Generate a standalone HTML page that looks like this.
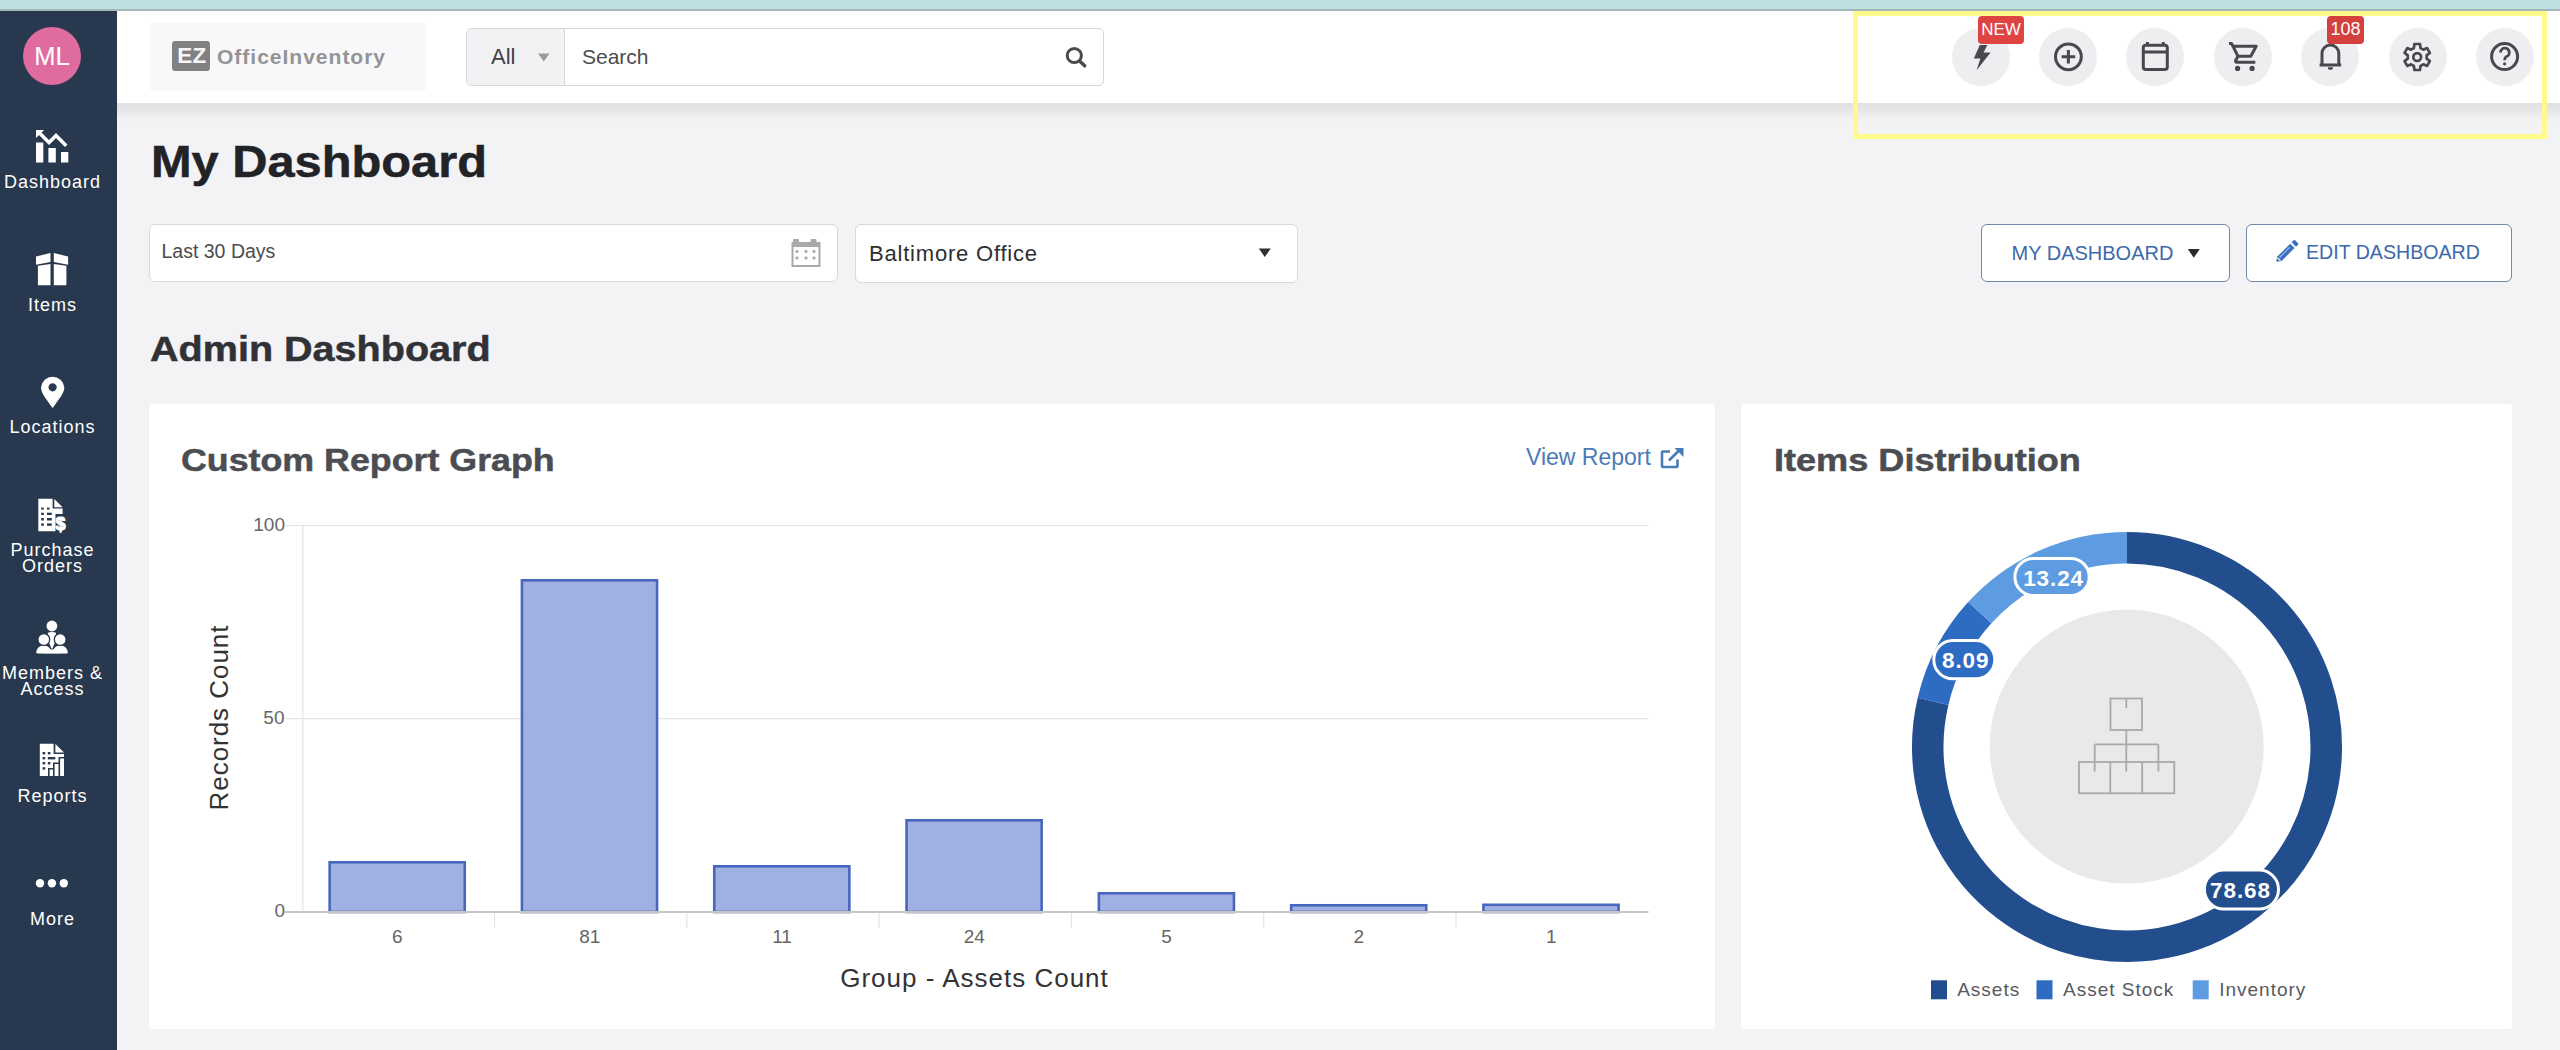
<!DOCTYPE html>
<html><head><meta charset="utf-8">
<style>
*{margin:0;padding:0;box-sizing:border-box}
html,body{width:2560px;height:1050px;overflow:hidden;background:#f3f3f6;font-family:"Liberation Sans",sans-serif;position:relative}
.a{position:absolute}
.t{position:absolute;white-space:nowrap}
#topstrip{left:0;top:0;width:2560px;height:11px;background:#bee0e3;border-bottom:2px solid #a3b7b9}
#side{left:0;top:11px;width:117px;height:1039px;background:#28384e}
#hdr{left:117px;top:11px;width:2443px;height:92px;background:#fff}
#hsh{left:117px;top:103px;width:2443px;height:19px;background:linear-gradient(#e2e2e5 0px,#e3e3e6 4px,#e6e6e9 7px,#ededf0 11px,#f1f1f4 15px,#f3f3f6 19px)}
.sl{color:#fff;font-size:18px;line-height:18px;letter-spacing:1px;text-align:center;width:117px;left:-6px}
.card{background:#fff;border-radius:3px}
.hd{font-weight:bold;transform-origin:0 0;-webkit-text-stroke:0.5px currentColor}
.circ{width:58px;height:58px;border-radius:50%;background:#eeeef0}
</style></head>
<body>
<div id="topstrip" class="a"></div>
<div id="side" class="a"></div>
<div id="hdr" class="a"></div>
<div id="hsh" class="a"></div>

<!-- avatar -->
<div class="a" style="left:23px;top:27px;width:58px;height:58px;border-radius:50%;background:#e06c9f"></div>
<div class="t" style="left:23px;width:58px;text-align:center;top:43.5px;font-size:25.5px;line-height:25.5px;color:#fff">ML</div>

<!-- sidebar labels -->
<div class="t sl" style="top:173.3px">Dashboard</div>
<div class="t sl" style="top:296.3px">Items</div>
<div class="t sl" style="top:417.8px">Locations</div>
<div class="t sl" style="top:541.2px">Purchase</div>
<div class="t sl" style="top:557px">Orders</div>
<div class="t sl" style="top:663.8px">Members &amp;</div>
<div class="t sl" style="top:680px">Access</div>
<div class="t sl" style="top:787.2px">Reports</div>
<div class="t sl" style="top:910.1px">More</div>

<!-- sidebar icons -->
<svg class="a" style="left:0;top:0" width="117" height="1050" viewBox="0 0 117 1050">
 <g fill="#fff">
  <!-- dashboard -->
  <path d="M36 130 L44 130 L41.5 132.5 L49 140 L56 133 L67.5 144.5 L65 147 L56 138 L49 145 L39 135 L36 138 Z"/>
  <rect x="36" y="142.5" width="7.3" height="20"/>
  <rect x="48.4" y="148" width="7.4" height="14.5"/>
  <rect x="61" y="152" width="7.3" height="10.5"/>
  <!-- items -->
  <path d="M36 256.4 L50.5 253.1 L50.5 262.1 L36 264.8 Z"/>
  <path d="M53.8 253.1 L68.1 256.4 L68.1 264.8 L53.8 262.1 Z"/>
  <path d="M37.9 265.7 L50.5 264 L50.5 285.2 L37.9 285.2 Z"/>
  <path d="M53.8 264 L66.4 265.7 L66.4 285.2 L53.8 285.2 Z"/>
  <!-- location -->
  <path d="M52.6 408.1 C47 400 41 393 41 387.4 A11.7 11.7 0 0 1 64.3 387.4 C64.3 393 58.2 400 52.6 408.1 Z M52.6 383.2 A4.1 4.1 0 1 0 52.61 383.2 Z" fill-rule="evenodd"/>
  <!-- purchase orders -->
  <path d="M38.3 498.8 L52.6 498.8 L52.6 508.6 L62.6 508.6 L62.6 514 L55.5 514 L55.5 531.2 L38.3 531.2 Z"/>
  <path d="M54.3 499 L62.6 507.3 L54.3 507.3 Z"/>
 </g>
 <g fill="#28384e">
  <rect x="41.2" y="507.6" width="2.6" height="2"/><rect x="47" y="507.6" width="2.6" height="2"/>
  <rect x="41.2" y="512.7" width="2.6" height="2.3"/><rect x="47" y="512.7" width="4.8" height="2.3"/>
  <rect x="41.2" y="518" width="2.6" height="2.5"/><rect x="47" y="518" width="4.8" height="2.5"/>
  <rect x="41.2" y="523.4" width="2.6" height="2.4"/><rect x="47" y="523.4" width="4.8" height="2.4"/>
 </g>
 <text x="60.6" y="529.6" font-family="Liberation Sans" font-weight="bold" font-size="18" fill="#fff" stroke="#fff" stroke-width="1.1" text-anchor="middle">$</text>
 <g fill="#fff">
  <!-- members -->
  <circle cx="51.9" cy="626" r="5.4"/>
  <path d="M47.8 632.8 Q51.9 631.2 56 632.8 L55 642 L51.9 650 L48.8 642 Z"/>
 </g>
 <g fill="#fff" stroke="#28384e" stroke-width="1.3">
  <path d="M35.3 654 C35.6 647.5 39.5 644.8 43.8 644.8 C48.1 644.8 51.8 647.5 52.3 654 Z"/>
  <path d="M51.6 654 C52.1 647.5 55.9 644.8 60.2 644.8 C64.5 644.8 68.4 647.5 68.8 654 Z"/>
  <circle cx="43.8" cy="639.5" r="5.9"/>
  <circle cx="60.2" cy="639.5" r="5.9"/>
 </g>
 <g fill="#fff">
  <rect x="38" y="650" width="28.3" height="3.4"/>
  <path d="M45 647 Q51.9 652 59 647 L60 653.3 H44 Z"/>
  <!-- reports -->
  <path d="M39.8 743.8 L53.6 743.8 L53.6 754 L64 754 L64 776 L39.8 776 Z"/>
  <path d="M55.4 744 L64 752.5 L55.4 752.5 Z"/>
 </g>
 <g fill="#28384e">
  <rect x="42.6" y="752" width="2.6" height="2.4"/><rect x="47.8" y="752" width="2.6" height="2.4"/>
  <rect x="42.6" y="757" width="2.6" height="2.4"/><rect x="47.8" y="757" width="7.5" height="2.4"/>
  <rect x="42.6" y="762" width="2.6" height="2.4"/><rect x="47.8" y="762" width="2.6" height="2.4"/>
  <rect x="42.6" y="767.2" width="2.6" height="2.4"/>
  <path d="M48 776 L48 768 L53 768 L53 762.5 L58.5 762.5 L58.5 757 L64 757 L64 758.6 L60.1 758.6 L60.1 776 L58.5 776 L58.5 764 L54.6 764 L54.6 776 L53 776 L53 769.5 L49.6 769.5 L49.6 776 Z"/>
 </g>
 <g fill="#fff">
  <circle cx="40" cy="883.3" r="4.2"/><circle cx="51.9" cy="883.3" r="4.2"/><circle cx="63.8" cy="883.3" r="4.2"/>
 </g>
</svg>

<!-- header: logo -->
<div class="a" style="left:150px;top:23px;width:276px;height:68px;background:#f8f8fa;border-radius:3px"></div>
<div class="a" style="left:172px;top:40.5px;width:38px;height:30px;background:#818184;border-radius:3px"></div>
<div class="t" style="left:173px;width:38px;text-align:center;top:45px;font-size:22.5px;line-height:22.5px;font-weight:bold;color:#f6f6f8;letter-spacing:0.3px">EZ</div>
<div class="t" style="left:216.5px;top:48.3px;font-size:19.5px;line-height:19.5px;font-weight:bold;color:#949497;letter-spacing:0.9px;transform:scaleX(1.08);transform-origin:0 0">OfficeInventory</div>

<!-- search -->
<div class="a" style="left:466px;top:28px;width:638px;height:58px;border:1px solid #d5d8dc;border-radius:5px;background:#fff"></div>
<div class="a" style="left:467px;top:29px;width:98px;height:56px;background:#f2f2f4;border-right:1px solid #d5d8dc;border-radius:4px 0 0 4px"></div>
<div class="t" style="left:491px;top:45.5px;font-size:22px;line-height:22px;color:#3f4144">All</div>
<svg class="a" style="left:537px;top:52px" width="14" height="11"><path d="M1 1.5 L12.5 1.5 L6.75 9.5 Z" fill="#9b9b9d"/></svg>
<div class="t" style="left:582px;top:46.2px;font-size:21px;line-height:21px;color:#4a4c50">Search</div>
<svg class="a" style="left:1062px;top:44px" width="28" height="28" viewBox="0 0 28 28"><circle cx="12.3" cy="11.5" r="7.1" fill="none" stroke="#494b4e" stroke-width="3"/><path d="M17.5 17 L22.7 21.8" stroke="#494b4e" stroke-width="3.5" stroke-linecap="round"/></svg>

<!-- header icons -->
<div class="a circ" style="left:1952px;top:28px"></div>
<div class="a circ" style="left:2039px;top:28px"></div>
<div class="a circ" style="left:2126px;top:28px"></div>
<div class="a circ" style="left:2214px;top:28px"></div>
<div class="a circ" style="left:2301px;top:28px"></div>
<div class="a circ" style="left:2389px;top:28px"></div>
<div class="a circ" style="left:2476px;top:28px"></div>
<svg class="a" style="left:1940px;top:10px" width="620" height="100" viewBox="1940 10 620 100">
 <g fill="#47494c" stroke="none">
  <path d="M1979.8 45 L1987.4 45 L1983.6 52.6 L1990.6 52.6 L1976.6 70.2 L1980.4 58.4 L1973.8 58.4 Z"/>
 </g>
 <g fill="none" stroke="#47494c" stroke-width="3">
  <circle cx="2068.4" cy="56.8" r="12.9"/>
  <path d="M2068.4 50 V63.6 M2061.6 56.8 H2075.2"/>
  <rect x="2143.3" y="45.3" width="24" height="24.3" rx="2.5"/>
  <path d="M2143.3 52 H2167.3"/>
  <path d="M2147.4 42 V46 M2163.3 42 V46"/>
  <path d="M2229 43.6 H2231.6 L2238 56.3 H2250.8 L2256.2 46.2 H2233.2 M2238 56.3 L2235.6 60.6 Q2235.4 62.3 2237.2 62.3 H2255.3" stroke-linejoin="round"/>
  <path d="M2322 63.8 V53.5 A8.4 8.4 0 0 1 2338.8 53.5 V63.8 M2319.6 65 H2341.2" stroke-linejoin="round"/>
  <circle cx="2504.6" cy="56.6" r="13"/>
  <path d="M2500.5 52.5 A4.4 4.4 0 1 1 2506.3 56.7 C2505 57.4 2504.6 58.2 2504.6 60.3" stroke-width="2.8"/>
 </g>
 <g fill="#47494c">
  <circle cx="2237.6" cy="68.4" r="2.6"/><circle cx="2252.1" cy="68.4" r="2.6"/>
  <path d="M2327.8 67.2 H2333 A2.6 2.6 0 0 1 2327.8 67.2 Z"/>
  <rect x="2329.3" y="42.5" width="2.2" height="3"/>
  <circle cx="2504.6" cy="63.8" r="1.6"/>
 </g>
 <g fill="none" stroke="#47494c" stroke-width="2.7" stroke-linejoin="round">
  <path d="M2413.92 47.98 L2414.43 43.99 L2419.97 43.99 L2420.48 47.98 L2423.37 49.65 L2427.08 48.10 L2429.85 52.89 L2426.65 55.33 L2426.65 58.67 L2429.85 61.11 L2427.08 65.90 L2423.37 64.35 L2420.48 66.02 L2419.97 70.01 L2414.43 70.01 L2413.92 66.02 L2411.03 64.35 L2407.32 65.90 L2404.55 61.11 L2407.75 58.67 L2407.75 55.33 L2404.55 52.89 L2407.32 48.10 L2411.03 49.65 Z"/>
  <circle cx="2417.2" cy="57" r="3.9"/>
 </g>
</svg>
<!-- badges -->
<div class="a" style="left:1978px;top:16px;width:46px;height:27.5px;background:#dd4442;border-radius:4px"></div>
<div class="t" style="left:1978px;width:46px;text-align:center;top:21.3px;font-size:17px;line-height:17px;color:#fff">NEW</div>
<div class="a" style="left:2327px;top:16px;width:37px;height:27.5px;background:#d3403e;border-radius:4px"></div>
<div class="t" style="left:2327px;width:37px;text-align:center;top:20.2px;font-size:18px;line-height:18px;color:#fff">108</div>
<!-- yellow highlight -->
<div class="a" style="left:1853px;top:11px;width:694px;height:128px;border:5.5px solid #fffa8c"></div>


<!-- page title -->
<div class="t hd" style="left:151.2px;top:139.6px;font-size:44px;line-height:44px;color:#222327;transform:scaleX(1.108)">My Dashboard</div>

<!-- filters -->
<div class="a" style="left:149px;top:223.5px;width:689px;height:58px;background:#fff;border:1px solid #d7d9dc;border-radius:6px"></div>
<div class="t" style="left:161.5px;top:242.2px;font-size:19.5px;line-height:19.5px;color:#4b4c4f">Last 30 Days</div>
<svg class="a" style="left:790px;top:236px" width="32" height="32" viewBox="0 0 32 32">
 <g fill="#a9a9ab">
  <rect x="3" y="3" width="6" height="5" rx="1"/><rect x="20.5" y="3" width="6" height="5" rx="1"/>
  <path fill-rule="evenodd" d="M1.5 6 H30.5 V31 H1.5 Z M3.5 11 V29 H28.5 V11 Z"/>
  <rect x="5.5" y="14" width="3" height="3" rx="1.2"/><rect x="14.5" y="14" width="3" height="3" rx="1.2"/><rect x="22.5" y="14" width="3" height="3" rx="1.2"/>
  <rect x="5.5" y="20.5" width="3" height="3" rx="1.2"/><rect x="14.5" y="20.5" width="3" height="3" rx="1.2"/><rect x="22.5" y="20.5" width="3" height="3" rx="1.2"/>
 </g>
</svg>
<div class="a" style="left:855px;top:223.5px;width:443px;height:59px;background:#fff;border:1px solid #d7d9dc;border-radius:6px"></div>
<div class="t" style="left:869px;top:242.8px;font-size:22px;line-height:22px;color:#2d2e31;letter-spacing:0.8px">Baltimore Office</div>
<svg class="a" style="left:1257px;top:247px" width="16" height="12"><path d="M1.8 1.5 L13.8 1.5 L7.8 10 Z" fill="#303134"/></svg>

<!-- buttons -->
<div class="a" style="left:1981px;top:223.5px;width:249px;height:58px;background:#fff;border:1.6px solid #6f87a8;border-radius:6px"></div>
<div class="t" style="left:2011.5px;top:243px;font-size:20px;line-height:20px;color:#3c69aa">MY DASHBOARD</div>
<svg class="a" style="left:2186px;top:247px" width="16" height="12"><path d="M1.8 2 L13.8 2 L7.8 10.8 Z" fill="#2a2b2e"/></svg>
<div class="a" style="left:2246px;top:223.5px;width:266px;height:58px;background:#fff;border:1.6px solid #6f87a8;border-radius:6px"></div>
<svg class="a" style="left:2274px;top:239px" width="26" height="26" viewBox="0 0 26 26">
 <path d="M2.2 22.8 L3.3 17.6 L16.2 4.7 L20.5 9 L7.6 21.9 Z" fill="#3b6fc0"/>
 <path d="M17.6 3.3 L19.3 1.6 Q20.4 0.6 21.5 1.6 L23.8 3.9 Q24.8 5 23.8 6.1 L22 7.8 Z" fill="#3b6fc0"/>
 <path d="M5.5 18.5 L15.6 8.4" stroke="#9fc0ee" stroke-width="1.1"/>
 <path d="M3.5 19 L6.5 21.5" stroke="#fff" stroke-width="1.2"/>
</svg>
<div class="t" style="left:2306px;top:243px;font-size:19.6px;line-height:19.6px;color:#3c69aa">EDIT DASHBOARD</div>

<!-- admin heading -->
<div class="t hd" style="left:149.8px;top:331px;font-size:35px;line-height:35px;color:#313236;transform:scaleX(1.13)">Admin Dashboard</div>

<!-- cards -->
<div class="a card" style="left:149px;top:404px;width:1565.5px;height:625px"></div>
<div class="a card" style="left:1741px;top:404px;width:770.5px;height:625px"></div>
<div class="t hd" style="left:181px;top:444px;font-size:32px;line-height:32px;color:#4b4d52;transform:scaleX(1.118)">Custom Report Graph</div>
<div class="t hd" style="left:1773.5px;top:444px;font-size:32px;line-height:32px;color:#4b4d52;transform:scaleX(1.128)">Items Distribution</div>
<div class="t" style="left:1526px;top:446.3px;font-size:23px;line-height:23px;color:#4a7bb8">View Report</div>
<svg class="a" style="left:1659px;top:446px" width="26" height="24" viewBox="0 0 26 24">
 <path d="M11 5.5 H4 Q3 5.5 3 6.5 V20 Q3 21 4 21 H17.5 Q18.5 21 18.5 20 V13.5" fill="none" stroke="#4a7bb8" stroke-width="2.6"/>
 <path d="M10 14.5 L21 3.5" stroke="#4a7bb8" stroke-width="2.6"/>
 <path d="M15.5 2 H24.5 V11 Z" fill="#4a7bb8"/>
</svg>

<!-- charts -->
<svg class="a" style="left:0;top:0" width="2560" height="1050" viewBox="0 0 2560 1050" font-family="Liberation Sans">
<g stroke="#e4e4e4" stroke-width="1.2">
<path d="M285.5 525.5 H1648.5 M285.5 718.7 H1648.5 M302.8 525.5 V912"/>
<path d="M494.5 912 V928 M686.8 912 V928 M879.1 912 V928 M1071.4 912 V928 M1263.7 912 V928 M1456.0 912 V928"/>
</g>
<rect x="329.65" y="862.30" width="135.1" height="49.70" fill="#a0b0e1" stroke="#4767bf" stroke-width="2.6"/>
<rect x="521.95" y="580.30" width="135.1" height="331.70" fill="#a0b0e1" stroke="#4767bf" stroke-width="2.6"/>
<rect x="714.25" y="866.30" width="135.1" height="45.70" fill="#a0b0e1" stroke="#4767bf" stroke-width="2.6"/>
<rect x="906.55" y="820.30" width="135.1" height="91.70" fill="#a0b0e1" stroke="#4767bf" stroke-width="2.6"/>
<rect x="1098.85" y="893.30" width="135.1" height="18.70" fill="#a0b0e1" stroke="#4767bf" stroke-width="2.6"/>
<rect x="1291.15" y="905.30" width="135.1" height="6.70" fill="#a0b0e1" stroke="#4767bf" stroke-width="2.6"/>
<rect x="1483.45" y="904.80" width="135.1" height="7.20" fill="#a0b0e1" stroke="#4767bf" stroke-width="2.6"/>
<path d="M285 912 H1648.5" stroke="#c6c6c6" stroke-width="1.8"/>
<g font-size="19" fill="#666" text-anchor="end">
<text x="285" y="531">100</text><text x="284.5" y="724.3">50</text><text x="285" y="917.4">0</text>
</g><g font-size="19" fill="#666" text-anchor="middle">
<text x="397.4" y="943">6</text>
<text x="589.7" y="943">81</text>
<text x="782.0" y="943">11</text>
<text x="974.2" y="943">24</text>
<text x="1166.5" y="943">5</text>
<text x="1358.9" y="943">2</text>
<text x="1551.2" y="943">1</text>
</g>
<text x="974.5" y="986.9" font-size="26" fill="#333" text-anchor="middle" letter-spacing="1.0">Group - Assets Count</text>
<text transform="translate(228.3 717.5) rotate(-90)" font-size="26" fill="#333" text-anchor="middle" letter-spacing="0.95">Records Count</text>
<circle cx="2126.7" cy="746.6" r="137" fill="#e9e9eb"/>
<path d="M2127.00 547.75 A199.25 199.25 0 1 1 1933.05 701.34" fill="none" stroke="#224e8e" stroke-width="31.5"/>
<path d="M1933.05 701.34 A199.25 199.25 0 0 1 1979.80 612.72" fill="none" stroke="#2e6cc4" stroke-width="31.5"/>
<path d="M1979.80 612.72 A199.25 199.25 0 0 1 2127.00 547.75" fill="none" stroke="#5d9ce0" stroke-width="31.5"/>
<g fill="none" stroke="#a9a9ab" stroke-width="1.8">
<rect x="2110.5" y="698.5" width="31.5" height="31.5"/>
<path d="M2126.3 698.5 V708 M2126.3 730 V771.5 M2094.7 744.4 H2158.4 M2094.7 744.4 V771.5 M2158.4 744.4 V771.5"/>
<rect x="2079" y="762" width="95.3" height="31.3"/>
<path d="M2110.3 762 V793.3 M2142.2 762 V793.3"/>
</g>
<rect x="2014.9" y="558.4" width="74.3" height="37.0" rx="18.5" fill="#5d9ce0" stroke="#fff" stroke-width="3"/><text x="2053.6" y="585.9" font-size="22.5" font-weight="bold" fill="#fff" text-anchor="middle" letter-spacing="0.9">13.24</text>
<rect x="1933.8" y="640.5" width="61.0" height="38.3" rx="19.1" fill="#2e6cc4" stroke="#fff" stroke-width="3"/><text x="1965.7" y="668.2" font-size="22.5" font-weight="bold" fill="#fff" text-anchor="middle" letter-spacing="0.9">8.09</text>
<rect x="2204.4" y="870.1" width="74.1" height="38.9" rx="19.4" fill="#224e8e" stroke="#fff" stroke-width="3"/><text x="2240.5" y="898.1" font-size="22.5" font-weight="bold" fill="#fff" text-anchor="middle" letter-spacing="0.9">78.68</text>
<rect x="1931" y="980.3" width="16" height="19" fill="#224e8e"/>
<rect x="2036.5" y="980.3" width="16" height="19" fill="#2e6cc4"/>
<rect x="2192.7" y="980.3" width="16" height="19" fill="#5d9ce0"/>
<g font-size="19" fill="#58595c" letter-spacing="1">
<text x="1957.2" y="995.9">Assets</text><text x="2063" y="995.9">Asset Stock</text><text x="2219.2" y="995.9">Inventory</text>
</g>
</svg>
</body></html>
